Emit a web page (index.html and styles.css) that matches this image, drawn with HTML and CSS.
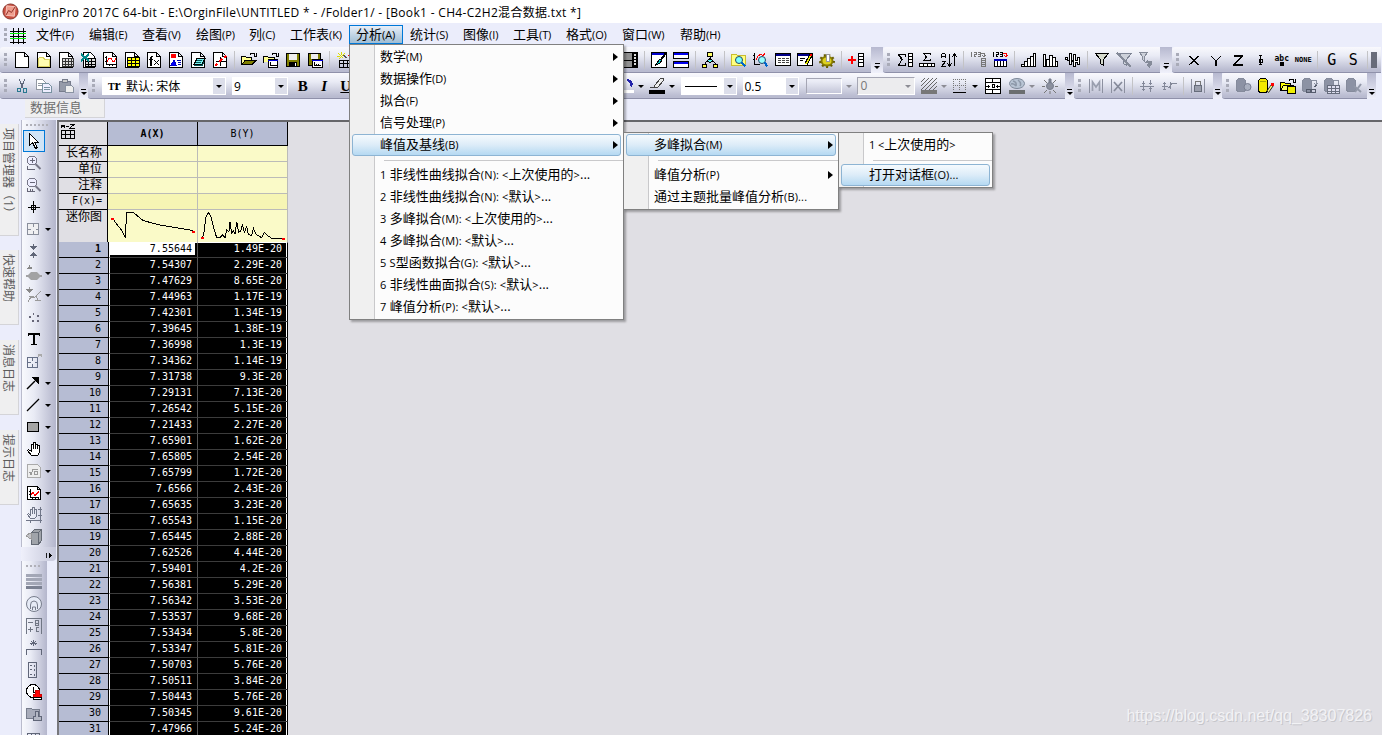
FILE: index.html
```html
<!DOCTYPE html>
<html lang="zh-CN">
<head>
    <meta charset="UTF-8">
    <title>OriginPro 2017C 64-bit</title>
    <link rel="stylesheet" href="styles.css">
</head>
<body>

<svg class="sprite">
    <!-- 新建 -->
    <symbol id="page" viewBox="0 0 16 16"><path class="w" d="M1.5.5h9l4 4v11h-13zM10.500.500v4h4"/></symbol>
    <symbol id="folder-new" viewBox="0 0 16 16"><path class="w" d="M1.5.5h9l4 4v11h-13zM10.500.500v4h4"/><path d="M2.500 14.500v-8l1-1h4l1 2h5v7z" fill="#fffdb0" stroke="#d8d060"/></symbol>
    <symbol id="sheet" viewBox="0 0 16 16"><path class="w" d="M1.5.5h9l4 4v11h-13zM10.500.500v4h4"/><path d="M4.500 6.500h11v8h-11zM4 9.500h12M4 12.500h12M7.500 6v9M10.500 6v9M13.500 6v9" fill="#ddd" stroke="#333"/></symbol>
    <symbol id="excel" viewBox="0 0 16 16"><path class="w" d="M3.500.5h7l4 4v11h-11z"/><path d="M5.500 6.500h10v8h-10zM5 9.500h11M5 12.500h11M8.500 6v9M11.500 6v9" fill="#ddd"/><path d="M1 2l8 7M9 2l-8 7" stroke="#088" stroke-width="2"/></symbol>
    <symbol id="graph" viewBox="0 0 16 16"><path class="w" d="M1.5.5h9l4 4v11h-13zM10.500.500v4h4"/><path d="M4.500 4v8.500h9M3 5.500h2M3 9.500h2M7.500 12v2M10.500 12v2"/><path d="M5 9.500l2-3h2l2 3h1l2-3" stroke="red"/></symbol>
    <symbol id="matrix" viewBox="0 0 16 16"><path class="w" d="M1.5.5h9l4 4v11h-13zM10.500.500v4h4"/><path d="M3.500 5.500h12v9h-12zM3.500 8.500h12M3.500 11.500h12M7.500 5v9M11.500 5v9" fill="#ff0"/></symbol>
    <symbol id="func" viewBox="0 0 16 16"><path class="w" d="M1.5.5h9l4 4v11h-13zM10.500.500v4h4"/><path d="M7 4.500h-1.500v8.500h-2M3 7.500h4"/><path d="M5 5v8" stroke-width="2"/><path d="M8 8l5 5M13 8l-5 5" stroke-width="1.300"/></symbol>
    <symbol id="layout" viewBox="0 0 16 16"><path class="w" d="M1.5.5h9l4 4v11h-13zM10.500.500v4h4"/><path d="M3 2h5v4h-5z" fill="red" stroke="none"/><path d="M3 13l3-5 2 5z" fill="#00f" stroke="#00c"/><path d="M9 8.500h4M10 10.500h3M10 12.500h3" stroke="#00a"/></symbol>
    <symbol id="notes" viewBox="0 0 16 16"><path class="w" d="M1.5.5h9l4 4v11h-13zM10.500.500v4h4"/><path d="M7 6.500h8l-3 6h-8z" fill="#7ee"/><path d="M4 13.500h8l2-3M7 8.500h5M6 10.500h5" stroke="#055"/></symbol>
    <symbol id="axisnew" viewBox="0 0 16 16"><path class="w" d="M1.5.5h9l4 4v11h-13zM10.500.500v4h4"/><path d="M8.500 5v9M4 9.500h10"/><path d="M3 14l2-2M12 6l2-2M7 10l3-3" stroke="red" stroke-width="1.500"/></symbol>
    <!-- 打开与保存 -->
    <symbol id="open" viewBox="0 0 16 16"><path d="M.5 12.500v-8h4l1 1h5v3" fill="#ffff90"/><path d="M1 12.500l3-4h11l-4 4z" fill="#808000"/><path d="M9 2.500l1-1h3l1 2M15.500 1v3.500h-3"/></symbol>
    <symbol id="open2" viewBox="0 0 16 16"><path d="M.5 10.500v-6h4l1 1h6v3" fill="#ffff90"/><path class="w" d="M5.500 7.500h9v8h-9z"/><path d="M5 8.500h10" stroke="#00d"/><path d="M7.500 10v3.500h6M9 2.500l1-1h3l1 2M15.500 1v3.500h-3"/></symbol>
    <symbol id="save" viewBox="0 0 16 16"><path d="M1.500 1.500h13v13h-13z" fill="#808000"/><path d="M4 2h8v6h-8z" fill="#eee" stroke="none"/><path d="M4 10h8v4h-8z" fill="#000" stroke="none"/><path d="M10 11h1v3h-1z" fill="#fff" stroke="none"/></symbol>
    <symbol id="save2" viewBox="0 0 16 16"><path d="M1.500 1.500h12v12h-12z" fill="#808000"/><path d="M4 2h7v5h-7z" fill="#eee" stroke="none"/><path class="w" d="M5.500 7.500h10v8h-10z"/><path d="M5 8.500h11" stroke="#00d"/><path d="M7.500 10v3.500h6M9.500 12v1M11.500 12v1"/></symbol>
    <symbol id="wizard" viewBox="0 0 16 16"><path d="M2 1l5 5M9 1l-6 6M5.500 0v3M1 4.500h3" stroke="#dd0"/><path d="M7 3l4 3" stroke="#555"/><path d="M12 3h4" stroke="red"/><path d="M3.500 8.500h12v7h-12zM3 11.500h12M7.500 8v7M11.500 8v7"/></symbol>
    <!-- 标准工具栏右半部分 -->
    <symbol id="film" viewBox="0 0 16 16"><path d="M.5.5h15v15h-15z" fill="#909090"/><path d="M10 1h5v14h-5z" fill="#000" stroke="none"/><path d="M12 2h2v2h-2zM12 5h2v2h-2zM12 8h2v2h-2zM12 11h2v2h-2z" fill="#ddd" stroke="none"/><path d="M0 8.500h10"/></symbol>
    <symbol id="brush" viewBox="0 0 16 16"><path class="w" d="M.5.5h15v15h-15z"/><path d="M1 2h14" stroke="#00c" stroke-width="2"/><path d="M15 1l-6 8" stroke-width="2"/><path d="M9 7l-5 6.500 5-2.500 2-3z" fill="#0cc"/></symbol>
    <symbol id="split" viewBox="0 0 16 16"><path class="w" d="M.5.5h15v6h-15zM.5 9.500h15v6h-15z"/><path d="M1 2h14M1 11h14" stroke="#00e" stroke-width="2"/></symbol>
    <symbol id="tree" viewBox="0 0 16 16"><path d="M5.500.5h5v4h-5z" fill="#ff6"/><path d="M8 5v3M3 12v-1l5-4 5 4v1"/><path d="M.5 12.500h4v3h-4zM11.500 12.500h4v3h-4z" fill="#ff4"/><path d="M5.500 8.500l2.500-2 2.500 2-2.500 2.500z" fill="#5ee"/></symbol>
    <symbol id="find" viewBox="0 0 16 16"><path d="M.5 2.500h5l1 1h8v10h-14z" fill="#ffff80" stroke="#c8bc30"/><circle class="r" cx="8" cy="8" r="3.500" fill="#7ff" stroke="#246"/><path d="M10.500 10.500l4 4" stroke="#06c" stroke-width="2"/></symbol>
    <symbol id="findg" viewBox="0 0 16 16"><path d="M1.500 1v11.500h5M0 3.500h2M0 7.500h2"/><path d="M3 8l2-4 3-2 2 2 2-3" stroke="red"/><circle class="r" cx="9" cy="8" r="3.500" fill="#9ff" stroke="#246"/><path d="M11.500 10.500l3 4" stroke="#06c" stroke-width="2"/></symbol>
    <symbol id="log" viewBox="0 0 16 16"><path class="w" d="M.5 1.500h15v12h-15z"/><path d="M1 3h14" stroke="#008" stroke-width="2"/><path d="M3 6.500h3M7 6.500h3M11 6.500h3M3 8.500h3M7 8.500h3M11 8.500h3M3 10.500h3M7 10.500h3M11 10.500h3" stroke="#444"/></symbol>
    <symbol id="script" viewBox="0 0 16 16"><path class="w" d="M.5 1.500h15v12h-15z"/><path d="M1 3h11" stroke="#008" stroke-width="2"/><path d="M3 6.500h5M3 8.500h3"/><path d="M14 3l-5 9" stroke="#000" stroke-width="3.500"/><path d="M14 3l-5 9" stroke="#ee0" stroke-width="1.500"/><path d="M13 2h2v2h-2z" fill="red" stroke="none"/></symbol>
    <symbol id="gear" viewBox="0 0 16 16"><g class="r"><ellipse cx="8" cy="9" rx="5.500" ry="4.500" fill="#dcd020" stroke="#887c00" stroke-width="2"/><ellipse cx="8" cy="9" rx="7" ry="6" stroke="#665c00" stroke-width="2" stroke-dasharray="2 2.500"/></g><path d="M7 2h3v7h-3z" fill="#fff" stroke="#999"/></symbol>
    <symbol id="addcol" viewBox="0 0 16 16"><path d="M4 4v8M0 8h8" stroke="red" stroke-width="2"/><path class="w" d="M10.500 1.500h5v13h-5zM10 4.500h6M10 7.500h6M10 10.500h6"/></symbol>
    <!-- 列统计 -->
    <symbol id="sumr" viewBox="0 0 16 16"><path d="M8.500 5v-2.500h-7l3 5.500-3 5.500h7v-2.500M2.500 3l3 5"/><path class="w" d="M11.500 1.500h4v13h-4zM11 4.500h5M11 7.500h5M11 10.500h5"/></symbol>
    <symbol id="sumc" viewBox="0 0 16 16"><path d="M11.500 3v-1.500h-7l3 3.500-3 3.500h7v-2"/><path class="w" d="M.5 11.500h15v3h-15zM4.500 11v4M8.500 11v4M12.500 11v4"/></symbol>
    <symbol id="sort" viewBox="0 0 16 16"><path d="M.5 6v-3l1-2h2l1 2v3M1 4.500h3M.5 9.500h4l-4 5h4M8.500 2v12M6 11l2.500 3 2.500-3M13.500 14v-12M11 5l2.500-3 2.500 3"/></symbol>
    <symbol id="rown" viewBox="0 0 16 16"><path d="M1.500 0v5M4 .5h2v2h-2v2h2M8 .5h2v4h-2M8 2.500h2M11 1.500h3v3M12 3l2 2 2-2" stroke="#777"/><path d="M11.500 6.500h4v8h-4zM11 8.500h4M11 10.500h4M11 12.500h4" stroke="#777"/></symbol>
    <symbol id="coln" viewBox="0 0 16 16"><path d="M1.500 0v5M4 .5h2v2h-2v2h2M8 .5h2v4h-2M8 2.500h2"/><path d="M11 1.500h3v3M12 3l2 2 2-2" stroke="red"/><path class="w" d="M2.500 7.500h12v7h-12zM5.500 8v7M8.500 8v7M11.500 8v7"/><path d="M2 7.500h13" stroke="#00b" stroke-width="2"/></symbol>
    <symbol id="bars1" viewBox="0 0 16 16"><path d="M.5 14.500v-2h3v2M3.500 14v-5h3v5M6.500 14v-8h3v8M9.500 14v-10h3v10M12.500 14v-13h2v13.500h-14" class="w"/></symbol>
    <symbol id="bars2" viewBox="0 0 16 16"><path d="M.5 14.500v-12h2v12M3.500 14v-7h3v7M6.500 14v-11h3v11M9.500 14v-9h3v9M12.500 14v-5h2v5.500h-14" class="w"/></symbol>
    <symbol id="bars3" viewBox="0 0 16 16"><path d="M.5 7.500v-2h2v3h2v-7h2v7h2v-6h2v6h2v-3h2v7h-2v-2h-2v4h-2v-5h-2v3h-2v-4z" class="w"/></symbol>
    <symbol id="funnel" viewBox="0 0 16 16"><path d="M1.500 1.500h13l-5 6v6l-3-2v-4z" fill="#d5dacd"/></symbol>
    <symbol id="funnelx" viewBox="0 0 16 16"><path d="M3.500 1.500h12l-5 6v6l-3-2v-4z" stroke="#7d8494" fill="#cdd1da"/><path d="M1 1l14 14" stroke="#858b99" stroke-width="2"/></symbol>
    <symbol id="funnelr" viewBox="0 0 16 16"><path d="M1.500.5h8l-3 4v5l-2-2v-3z" stroke="#858b99" fill="#cdd1da"/><path d="M7 10l3-3v2h4v3l-2 2v2l-4-3 2-2h-3z" fill="#858b99" stroke="none"/></symbol>
    <!-- 设置列属性 -->
    <symbol id="cx" viewBox="0 0 16 16"><path d="M3 4l10 9M13 4l-10 9" stroke-width="1.300"/></symbol>
    <symbol id="cy" viewBox="0 0 16 16"><path d="M3 4l5 5 5-5M8 9v5" stroke-width="1.300"/></symbol>
    <symbol id="cz" viewBox="0 0 16 16"><path d="M4 4h8v1l-8 7v1h9" stroke-width="1.300"/></symbol>
    <symbol id="ci" viewBox="0 0 16 16"><path d="M7 3.500h3M8.500 3v10M7 12.500h3M7 7h3v3h-3z"/></symbol>
    <!-- 格式 -->
    <symbol id="cut" viewBox="0 0 16 16"><path d="M5 1l4 9M11 1l-4 9" stroke="#60687c"/><path d="M3.500 10.500h3v3h-3zM9.500 10.500h3v4h-3z" stroke="#287890"/></symbol>
    <symbol id="copy" viewBox="0 0 16 16"><path d="M.5 1.500h6l3 3v7h-9zM2 5.500h5M2 7.500h5" fill="#fff" stroke="#9298a2"/><path d="M6.500 5.500h6l3 3v6h-9zM8 9.500h6M8 11.500h6" fill="#eef" stroke="#7892a0"/></symbol>
    <symbol id="paste" viewBox="0 0 16 16"><path d="M1 3.500h11v10h-11z" fill="#969ba9" stroke="#777d8c"/><path d="M4 1.500h5v3h-5z" fill="#ccc" stroke="#777d8c"/><path d="M7.500 7.500h6l2 2v5h-8z" fill="#eee" stroke="#8a93a2"/></symbol>
    <symbol id="fill" viewBox="0 0 16 16"><path d="M9 2q6-1 5 7l-2-3" fill="#22a" stroke="#22a"/><path d="M0 12h16v3h-16z" fill="#fff" stroke="none"/></symbol>
    <symbol id="pen" viewBox="0 0 16 16"><path d="M11.500.5h3v2l-6 7h-3v-2zM5 9l-4 1" fill="#eee" stroke="#444"/><path d="M0 12h16v4h-16z" fill="#000" stroke="none"/></symbol>
    <symbol id="hatch" viewBox="0 0 16 16"><path d="M0 4l4-4M0 8l8-8M0 12l12-12M4 12l12-12M8 12l8-8M12 12l4-4" stroke="#666"/><path d="M0 12h16v4h-16z" fill="#777" stroke="none"/></symbol>
    <symbol id="border" viewBox="0 0 16 16"><path d="M1.500 1v12M7.500 1v12M13.500 1v12M1 1.500h13M1 7.500h13" stroke="#777" stroke-dasharray="1 1"/><path d="M1 14.500h13"/></symbol>
    <symbol id="merge" viewBox="0 0 16 16"><path class="w" d="M.5.5h15v15h-15zM.5 4.500h15M.5 11.500h15M7.500 0v4M7.500 12v4"/><path d="M1 8.500h4M11 8.500h4M3.500 7v3M12.500 7v3M7.500 6.500h2v3h-2z"/></symbol>
    <symbol id="globe" viewBox="0 0 16 16"><g class="r"><ellipse cx="8" cy="5.500" rx="7.500" ry="5" fill="#b8c4d4" stroke="#7d8898"/><path d="M4 3q4 1 3 5M9 2q4 3 2 6M2 6q3-1 5 2" stroke="#8d98a8" stroke-width="1.500"/></g><path d="M0 12h16v4h-16z" fill="#6b6e70" stroke="none"/></symbol>
    <symbol id="bulb" viewBox="0 0 16 16"><g class="r"><path d="M7 1h2v4h-2z" fill="#7b808e" stroke="#777d8c"/><circle cx="8" cy="8" r="3.500" fill="#8b909e" stroke="#777d8c"/><path d="M0 8.500h3M13 8.500h3M2 2l3 3M14 2l-3 3M2 15l3-3M14 15l-3-3M8 13v3" stroke="#777"/></g></symbol>
    <symbol id="mm" viewBox="0 0 16 16"><path d="M1.500 1v14M14.500 1v14" stroke="#8c90a0"/><path class="r" d="M4.500 13v-9l3.500 5 3.500-5v9" stroke="#9a9fae" stroke-width="1.700"/></symbol>
    <symbol id="mx" viewBox="0 0 16 16"><path d="M1.500 1v14M14.500 1v14" stroke="#8c90a0"/><path class="r" d="M4 4l8 9M12 4l-8 9" stroke="#858a9a" stroke-width="1.700"/></symbol>
    <symbol id="ud" viewBox="0 0 16 16"><path d="M4.500 3v10M11.500 2v5M11.500 9v5M1 8.500h14M3 5.500h3M3 11.500h3M10 5.500h3M10 10.500h3" stroke="#838899"/></symbol>
    <symbol id="ud2" viewBox="0 0 16 16"><path d="M3.500 4v8M2 5.500h3M2 11.500h3M1 8.500h5l2 1 3-4h5M9.500 4v7" stroke="#838899"/></symbol>
    <symbol id="lock" viewBox="0 0 16 16"><path d="M1.500 1v14M14.500 1v14" stroke="#8c90a0"/><path d="M5.500 7v-3l1-1h3l1 1v3" stroke="#777"/><path d="M4.500 7.500h7v6h-7z" fill="#9a9eac" stroke="#666c7a"/></symbol>
    <!-- 数据库 -->
    <symbol id="db" viewBox="0 0 16 16"><path d="M.5 2.500l2-2h5l2 2v10l-2 1h-5l-2-1z" fill="#8c92a4" stroke="#858b9c"/></symbol>
    <symbol id="dbs" viewBox="0 0 16 16"><use href="#db"/><circle class="r" cx="11.500" cy="9" r="3.500" fill="#aab0c0" stroke="#777d90"/></symbol>
    <symbol id="dbe" viewBox="0 0 16 16"><path d="M.5 2.500l2-2h5l2 2v11l-2 1h-5l-2-1z" fill="#f4ea00"/><path d="M2 3.500h6" stroke="#aa0"/><path class="r" d="M14.500 7l-5 7" stroke="#000" stroke-width="3"/><path class="r" d="M14 7.500l-4 6" stroke="#ff8" stroke-width="1.500"/><path d="M13 5h3v3h-3z" fill="red" stroke="none"/></symbol>
    <symbol id="dbo" viewBox="0 0 16 16"><path d="M.5 11.500v-7h4l1 1h5v3" fill="#ff0"/><path d="M.5 12.500l3-5h10l-3 5z" fill="#ffff60"/><path d="M7.500 9l2-1h4l2 1v6h-8z" fill="#ee0"/><path d="M9 2.500l1-1h3l1 2M15.500 1v3.500h-3"/></symbol>
    <symbol id="dbv" viewBox="0 0 16 16"><use href="#db"/><path d="M10 2.500h4v4M12 5l2 2 2-2" stroke="#8a90a0"/><path d="M4.500 11.500h4v3h-4zM9.500 11.500h4v3h-4zM12 9l3-2" stroke="#555b6c"/></symbol>
    <symbol id="dbt" viewBox="0 0 16 16"><use href="#db"/><path d="M10 2.500h4v4" stroke="#8a90a0"/><path d="M3.500 7.500h12v8h-12zM3 10.500h12M3 13.500h12M7.500 7v9M11.500 7v9" fill="#dde" stroke="#666c7c"/></symbol>
    <symbol id="dbx" viewBox="0 0 16 16"><use href="#db"/><path class="r" d="M8 8l7 6M15 6l-6 8" stroke="#9298a8" stroke-width="2"/></symbol>
    <!-- 左侧工具 -->
    <symbol id="arrow" viewBox="0 0 16 16"><path class="w" d="M3.500.5v12l3-3 3 6 2-1-3-5h4z"/></symbol>
    <symbol id="zin" viewBox="0 0 16 16"><circle cx="6" cy="5.500" r="4.500" fill="#eef" stroke="#778"/><path d="M4 5.500h5M6.500 3v5M1.500 11v3.500h7" stroke="#667"/><path class="r" d="M9.500 9l5 5" stroke="#778" stroke-width="2"/></symbol>
    <symbol id="zout" viewBox="0 0 16 16"><circle cx="6" cy="5.500" r="4.500" fill="#eef" stroke="#778"/><path d="M4 5.500h5M1.500 11v3.500h7M4.500 12v2M6.500 12v2" stroke="#667"/><path class="r" d="M9.500 9l5 5" stroke="#778" stroke-width="2"/></symbol>
    <symbol id="cross" viewBox="0 0 16 16"><path d="M7.500 2v12M2 8.500h12M5.500 6.500h4v4h-4z"/></symbol>
    <symbol id="box4" viewBox="0 0 16 16"><path d="M1.500 2.500h11v11h-11zM7.500 3v3M7.500 10v3M2 8.500h3M10 8.500h3" stroke="#8a8f9c" fill="#f0f0f2"/></symbol>
    <symbol id="updn" viewBox="0 0 16 16"><path d="M7.500 1v3M7.500 12v3" stroke="#606678"/><path d="M4 3h7l-3.500 4zM4 13h7l-3.500-4z" fill="#606678" stroke="none"/></symbol>
    <symbol id="mask" viewBox="0 0 16 16"><path d="M3.500 0v4M1 3.500h5" stroke="#888"/><path d="M2 2h4l-2 3z" fill="#888" stroke="none"/><path class="r" d="M0 10h2l3-3h6l3 3h2v2h-2l-3 3h-6l-3-3h-2z" fill="#a2a2a4" stroke="none"/></symbol>
    <symbol id="maskr" viewBox="0 0 16 16"><path d="M3.500 0v3M2 15l3-5 3 1 7-7M3 9.500h5M9 13.500h6M10 9l2 4" stroke="#999"/><path d="M0 2h7l-3.500 4z" fill="#888" stroke="none"/></symbol>
    <symbol id="dots4" viewBox="0 0 16 16"><path d="M3 7h2v2h-2zM7 4h1v2h-1zM11 6h2v2h-2zM6 11h2v2h-2zM11 11h2v2h-2z" fill="#667" stroke="none"/></symbol>
    <symbol id="text" viewBox="0 0 16 16"><path d="M2.500 5v-2.500h11v2.500M5 13.500h6"/><path d="M8 2v11" stroke-width="2"/><path d="M2 3.500h12"/></symbol>
    <symbol id="box5" viewBox="0 0 16 16"><path d="M1.500 4.500h10v10h-10zM6.500 5v3M6.500 11v3M2 9.500h3M9 9.500h3" stroke="#667088"/><path d="M12.500 4v-3h3v3M12.500 2.500h3" stroke="#aaa"/></symbol>
    <symbol id="arr" viewBox="0 0 16 16"><path class="r" d="M1 14l8-8" stroke-width="1.500"/><path d="M12.500 2v7l-7-7z" fill="#000" stroke="none"/></symbol>
    <symbol id="line" viewBox="0 0 16 16"><path class="r" d="M1 14l12-12" stroke-width="1.300"/></symbol>
    <symbol id="rect" viewBox="0 0 16 16"><path d="M1.500 3.500h11v9h-11z" fill="#a4a4a4"/></symbol>
    <symbol id="hand" viewBox="0 0 16 16"><path class="w" d="M5.500 14.500l-4-5 1-1 3 2v-7h2v-2h2v2h2v1h2v7l-2 3zM7.500 3v5M9.500 3v5M11.500 4v4"/></symbol>
    <symbol id="eq" viewBox="0 0 16 16"><path d="M1.500 1.500h10l3 3v10h-13z" fill="#eee" stroke="#aaa"/><path d="M3 9.500h1l1 2 2-5h5M8.500 8.500h3v3h-3z" stroke="#999"/></symbol>
    <symbol id="gr2" viewBox="0 0 16 16"><path class="w" d="M1.500 1.500h10l3 3v10h-13zM11.500 1.500v3h3"/><path d="M4 4v8h9M6.500 12v2M9.500 12v2M12.500 12v2M3 6.500h2M3 9.500h2"/><path d="M5 9.500l2-2 2 3 4-4" stroke="red"/></symbol>
    <symbol id="handg" viewBox="0 0 16 16"><path d="M4.500 11.500l-3-4 1-1 2 2v-6h2v-2h2v2h2v7l-2 2zM6.500 3v4M8.500 3v4M14.500 0v16M0 13.500h16M12 2.500h4M12 8.500h4M4.500 13v3" stroke="#707688"/></symbol>
    <symbol id="cube" viewBox="0 0 16 16"><path d="M5.500 3.500l3-3h7v11l-3 4h-7zM5.500 3.500h7v12M12.500 3.500l3-3" fill="#a0a4aa" stroke="#646a74"/><path d="M0 7l4-3h1v6z" fill="#c4c4c8" stroke="#999"/></symbol>
    <symbol id="lines" viewBox="0 0 16 16"><path d="M0 1.500h16M0 5.500h16M0 9.500h16" stroke="#a3a7b6" stroke-width="3"/><path d="M0 13.500h16" stroke="#7b8192" stroke-width="3"/></symbol>
    <symbol id="ring" viewBox="0 0 16 16"><g class="r"><circle cx="8" cy="8" r="7.500" fill="#e6ebf6" stroke="#777d8c"/><path d="M4.500 13v-4q0-4 3.500-4t3.500 4v4M6.500 14v-3h3v3" stroke="#777d8c"/></g></symbol>
    <symbol id="bc" viewBox="0 0 16 16"><path d="M.5 15.500v-15h15v15M2 4.500h5M2 11.500h5M4.500 9v5" stroke="#707684"/><path d="M9.500 2.500h3v5h-3zM9 5.500h4M13 9.500h-3v4h3" stroke="#707684"/></symbol>
    <symbol id="ast" viewBox="0 0 16 16"><path d="M7.500 0v6M4 3.500h7M5 1l5 4M10 1l-5 4M.5 15v-5.500h15v5.500" stroke="#606678"/></symbol>
    <symbol id="scale" viewBox="0 0 16 16"><path d="M2.500.5h8v15h-8zM4 3.500h2M4 7.500h2M4 12.500h2M8.500 3v2M8.500 7v2M8.500 12v2" stroke="#606678"/></symbol>
    <symbol id="stamp" viewBox="0 0 16 16"><circle class="w" cx="7" cy="7" r="6.500"/><path d="M7.500 3v5h3"/><path d="M9 6h4v4h2v3h-8v-3h2z" fill="red" stroke="#c00"/><path class="w" d="M7.500 13.500h8v2h-8z"/></symbol>
    <symbol id="fstamp" viewBox="0 0 16 16"><path d="M.5 2.500h5l1 1h7v9h-13z" fill="#a8acba" stroke="#777d8c"/><path d="M9.500 5.500h3v5h3v4h-8v-4h2z" fill="#b4b8c4" stroke="#606678"/></symbol>
    <symbol id="tbl" viewBox="0 0 16 16"><path d="M1.500 5.500h12v10h-12zM1 8.500h12M5.500 5v10M9.500 5v10" stroke="#606678"/></symbol>
</svg>

<div class="title">
    <svg class="logo" viewBox="0 0 18 18"><circle cx="9" cy="9" r="8" fill="#c94e40" stroke="#86352c"/><path d="M5 3l9 1-1 10-9-1z" fill="#ee9d8d" stroke="#f6c6bb"/><path d="M4 13l3-5 3 2 4-6" stroke="#8a2820" fill="none"/></svg>
    <span>OriginPro 2017C 64-bit - E:\OrginFile\UNTITLED * - /Folder1/ - [Book1 - CH4-C2H2混合数据.txt *]</span>
</div>

<div class="menubar">
    <div class="menu-icon"><i class="grip"></i><svg viewBox="0 0 16 16"><path d="M0 3.500h16M0 8.500h16M0 14.500h16M3.500 0v16M8.500 0v16M13.500 0v16"/><path d="M0 5.500h16M0 10.500h16" stroke="#0e0"/></svg></div>
    <span>文件<small>(F)</small></span>
    <span>编辑<small>(E)</small></span>
    <span>查看<small>(V)</small></span>
    <span>绘图<small>(P)</small></span>
    <span>列<small>(C)</small></span>
    <span>工作表<small>(K)</small></span>
    <span class="open">分析<small>(A)</small></span>
    <span>统计<small>(S)</small></span>
    <span>图像<small>(I)</small></span>
    <span>工具<small>(T)</small></span>
    <span>格式<small>(O)</small></span>
    <span>窗口<small>(W)</small></span>
    <span>帮助<small>(H)</small></span>
</div>

<div class="toolrow">
    <div class="bar bar-std">
        <i class="grip"></i>
        <svg><use href="#page"/></svg><svg><use href="#folder-new"/></svg><svg><use href="#sheet"/></svg><svg><use href="#excel"/></svg><svg><use href="#graph"/></svg><svg><use href="#matrix"/></svg><svg><use href="#func"/></svg><svg><use href="#layout"/></svg><svg><use href="#notes"/></svg><svg><use href="#axisnew"/></svg>
        <i class="sep"></i>
        <svg><use href="#open"/></svg><svg><use href="#open2"/></svg><svg><use href="#save"/></svg><svg><use href="#save2"/></svg>
        <i class="sep"></i>
        <svg><use href="#wizard"/></svg>
        <i class="space"></i>
        <svg><use href="#film"/></svg>
        <i class="sep"></i>
        <svg><use href="#brush"/></svg><svg><use href="#split"/></svg>
        <i class="sep"></i>
        <svg><use href="#tree"/></svg>
        <i class="sep"></i>
        <svg><use href="#find"/></svg><svg><use href="#findg"/></svg><svg><use href="#log"/></svg><svg><use href="#script"/></svg><svg><use href="#gear"/></svg>
        <i class="sep"></i>
        <svg><use href="#addcol"/></svg>
    </div>
    <i class="more"></i>
    <div class="bar bar-col">
        <i class="grip"></i>
        <svg><use href="#sumr"/></svg><svg><use href="#sumc"/></svg><svg><use href="#sort"/></svg>
        <i class="sep"></i>
        <svg><use href="#rown"/></svg><svg><use href="#coln"/></svg>
        <i class="sep"></i>
        <svg><use href="#bars1"/></svg><svg><use href="#bars2"/></svg><svg><use href="#bars3"/></svg>
        <i class="sep"></i>
        <svg><use href="#funnel"/></svg><svg><use href="#funnelx"/></svg><svg><use href="#funnelr"/></svg>
    </div>
    <i class="more"></i>
    <div class="bar bar-set">
        <i class="grip"></i>
        <svg><use href="#cx"/></svg><svg><use href="#cy"/></svg><svg><use href="#cz"/></svg><svg><use href="#ci"/></svg>
        <b class="tiny abc">abc</b><b class="tiny">NONE</b>
        <i class="sep"></i>
        <b class="letter">G</b><b class="letter">S</b>
        <i class="sep"></i>
        <i class="edge"></i>
    </div>
</div>

<div class="toolrow">
    <div class="bar bar-edit">
        <i class="grip"></i>
        <svg><use href="#cut"/></svg><svg><use href="#copy"/></svg><svg><use href="#paste"/></svg>
    </div>
    <i class="more small"></i>
    <div class="bar bar-fmt">
        <i class="grip"></i>
        <div class="combo font"><b class="tt"><small>T</small>r</b><span>默认: 宋体</span><i class="btn"></i></div>
        <div class="combo size"><span>9</span><i class="btn"></i></div>
        <b class="biu">B</b><b class="biu it">I</b><b class="biu un">U</b>
        <i class="space"></i>
        <svg><use href="#fill"/></svg><i class="dd"></i>
        <svg><use href="#pen"/></svg><i class="dd"></i>
        <div class="combo style"><i class="stroke"></i><i class="btn"></i></div>
        <div class="combo width"><span>0.5</span><i class="btn"></i></div>
        <div class="flat"></div><i class="dd off"></i>
        <div class="flat num"><span>0</span><i class="dd off"></i></div>
        <svg class="gap"><use href="#hatch"/></svg><i class="dd off"></i>
        <svg><use href="#border"/></svg><i class="dd"></i>
        <svg class="gap"><use href="#merge"/></svg>
        <svg class="gap"><use href="#globe"/></svg><i class="dd off"></i>
        <svg class="gap"><use href="#bulb"/></svg>
    </div>
    <i class="more small"></i>
    <div class="bar bar-mask">
        <i class="grip"></i>
        <svg><use href="#mm"/></svg><svg><use href="#mx"/></svg>
        <i class="sep"></i>
        <svg><use href="#ud"/></svg><svg><use href="#ud2"/></svg>
        <i class="sep"></i>
        <svg><use href="#lock"/></svg>
    </div>
    <i class="more small"></i>
    <div class="bar bar-db">
        <i class="grip"></i>
        <svg><use href="#dbs"/></svg><svg><use href="#dbe"/></svg><svg><use href="#dbo"/></svg><svg><use href="#dbv"/></svg><svg><use href="#dbt"/></svg><svg><use href="#dbx"/></svg>
    </div>
    <i class="more small"></i>
</div>

<div class="info"><span>数据信息</span></div>

<div class="main">
    <div class="docks">
        <div class="dock first">项目管理器（1）</div>
        <div class="dock">快速帮助</div>
        <div class="dock">消息日志</div>
        <div class="dock">提示日志</div>
    </div>

    <div class="side">
        <div class="palette tools">
            <i class="grip-h"></i>
            <div class="tool on"><svg><use href="#arrow"/></svg></div>
            <div class="tool"><svg><use href="#zin"/></svg></div>
            <div class="tool"><svg><use href="#zout"/></svg></div>
            <div class="tool"><svg><use href="#cross"/></svg></div>
            <div class="tool"><svg><use href="#box4"/></svg><i class="dd"></i></div>
            <div class="tool"><svg><use href="#updn"/></svg></div>
            <div class="tool"><svg><use href="#mask"/></svg><i class="dd"></i></div>
            <div class="tool"><svg><use href="#maskr"/></svg><i class="dd"></i></div>
            <div class="tool"><svg><use href="#dots4"/></svg></div>
            <div class="tool"><svg><use href="#text"/></svg></div>
            <div class="tool"><svg><use href="#box5"/></svg></div>
            <div class="tool"><svg><use href="#arr"/></svg><i class="dd"></i></div>
            <div class="tool"><svg><use href="#line"/></svg><i class="dd"></i></div>
            <div class="tool"><svg><use href="#rect"/></svg><i class="dd"></i></div>
            <div class="tool"><svg><use href="#hand"/></svg></div>
            <div class="tool"><svg><use href="#eq"/></svg><i class="dd"></i></div>
            <div class="tool"><svg><use href="#gr2"/></svg><i class="dd"></i></div>
            <div class="tool"><svg><use href="#handg"/></svg></div>
            <div class="tool"><svg><use href="#cube"/></svg></div>
        </div>
        <div class="more-h"><svg viewBox="0 0 8 8"><path d="M.5 1v6"/><path d="M3 0l4 4-4 4z" fill="#000" stroke="none"/></svg></div>
        <div class="palette extra">
            <i class="grip-h"></i>
            <div class="tool"><svg><use href="#lines"/></svg></div>
            <div class="tool"><svg><use href="#ring"/></svg></div>
            <div class="tool"><svg><use href="#bc"/></svg></div>
            <div class="tool"><svg><use href="#ast"/></svg></div>
            <div class="tool"><svg><use href="#scale"/></svg></div>
            <div class="tool"><svg><use href="#stamp"/></svg></div>
            <div class="tool"><svg><use href="#fstamp"/></svg></div>
            <div class="tool"><svg><use href="#tbl"/></svg></div>
        </div>
    </div>

    <div class="work">
        <div class="sheet">
            <div class="row head">
                <div class="corner"><svg viewBox="0 0 16 16"><path d="M1.500 4v-3h3v3M1 2.500h3M6 2.500h3M10 .5h4l-4 3.500h4.500M1.500 6.500h13v8h-13zM1 10.500h13M5.500 6v8M10.500 6v8"/></svg></div>
                <div class="col"><b>A(X)</b></div>
                <div class="col">B(Y)</div>
            </div>
            <div class="row label"><div>长名称</div><div></div><div></div></div>
            <div class="row label"><div>单位</div><div></div><div></div></div>
            <div class="row label"><div>注释</div><div></div><div></div></div>
            <div class="row label fx"><div>F(x)=</div><div></div><div></div></div>
            <div class="row label spark">
                <div>迷你图</div>
                <div><svg viewBox="324 345 270 96"><path d="M338 370l14 20 10 12 14 24 4-74h20l14 12 16 13 50 13 55 9 45 8"/><path class="end" d="M333 371h10M575 410h10"/></svg></div>
                <div><svg viewBox="594 345 270 96"><path d="M607 430l5-20 6-45 7-12 7 9 8 33 10 33h10l8-8 7 8 5-23 7 5 3-30 5 35 5-7 5 10 5-38 6 32 6-4 5-20 6 24 7-17 5 23 10 4 5-22 8 18 17 10 8-16 7 8 15 10 35 2"/><path class="end" d="M602 430h10M845 432h10"/></svg></div>
            </div>
            <div class="cells" id="cells"></div>
        </div>
        <div class="watermark">https://blog.csdn.net/qq_38307826</div>
    </div>
</div>

<!-- 分析菜单 -->
<div class="menu menu-analysis">
    <div class="item sub">数学<small>(M)</small></div>
    <div class="item sub">数据操作<small>(D)</small></div>
    <div class="item sub">拟合<small>(F)</small></div>
    <div class="item sub">信号处理<small>(P)</small></div>
    <div class="item sub active">峰值及基线<small>(B)</small></div>
    <hr>
    <div class="item"><small>1</small> 非线性曲线拟合<small>(N): &lt;</small>上次使用的<small>&gt;</small>...</div>
    <div class="item"><small>2</small> 非线性曲线拟合<small>(N): &lt;</small>默认<small>&gt;</small>...</div>
    <div class="item"><small>3</small> 多峰拟合<small>(M): &lt;</small>上次使用的<small>&gt;</small>...</div>
    <div class="item"><small>4</small> 多峰拟合<small>(M): &lt;</small>默认<small>&gt;</small>...</div>
    <div class="item"><small>5 S</small>型函数拟合<small>(G): &lt;</small>默认<small>&gt;</small>...</div>
    <div class="item"><small>6</small> 非线性曲面拟合<small>(S): &lt;</small>默认<small>&gt;</small>...</div>
    <div class="item"><small>7</small> 峰值分析<small>(P): &lt;</small>默认<small>&gt;</small>...</div>
</div>

<div class="menu menu-peak">
    <div class="item sub active">多峰拟合<small>(M)</small></div>
    <hr>
    <div class="item sub">峰值分析<small>(P)</small></div>
    <div class="item">通过主题批量峰值分析<small>(B)...</small></div>
</div>

<div class="menu menu-multi">
    <div class="item"><small>1 &lt;</small>上次使用的<small>&gt;</small></div>
    <hr>
    <div class="item active">打开对话框<small>(O)...</small></div>
</div>

<script>
    const data = [
        ['7.55644', '1.49E-20'], ['7.54307', '2.29E-20'], ['7.47629', '8.65E-20'],
        ['7.44963', '1.17E-19'], ['7.42301', '1.34E-19'], ['7.39645', '1.38E-19'],
        ['7.36998', '1.3E-19'], ['7.34362', '1.14E-19'], ['7.31738', '9.3E-20'],
        ['7.29131', '7.13E-20'], ['7.26542', '5.15E-20'], ['7.21433', '2.27E-20'],
        ['7.65901', '1.62E-20'], ['7.65805', '2.54E-20'], ['7.65799', '1.72E-20'],
        ['7.6566', '2.43E-20'], ['7.65635', '3.23E-20'], ['7.65543', '1.15E-20'],
        ['7.65445', '2.88E-20'], ['7.62526', '4.44E-20'], ['7.59401', '4.2E-20'],
        ['7.56381', '5.29E-20'], ['7.56342', '3.53E-20'], ['7.53537', '9.68E-20'],
        ['7.53434', '5.8E-20'], ['7.53347', '5.81E-20'], ['7.50703', '5.76E-20'],
        ['7.50511', '3.84E-20'], ['7.50443', '5.76E-20'], ['7.50345', '9.61E-20'],
        ['7.47966', '5.24E-20']
    ];

    // 填充数据行
    document.getElementById('cells').innerHTML = data.map((r, i) => `
        <div class="row data">
            <div class="num">${i + 1}</div>
            <div class="cell">${r[0]}</div>
            <div class="cell">${r[1]}</div>
        </div>`).join('');
</script>

</body>
</html>
```

FILE: styles.css
```css
* {
    box-sizing: border-box;
}
body {
    margin: 0;
    width: 1382px;
    height: 735px;
    overflow: hidden;
    position: relative;
    display: flex;
    flex-direction: column;
    background: #ebedfb;
    color: #000;
    font-family: "Open Sans", "Noto Sans CJK SC", sans-serif;
    font-size: 13px;
}
i {
    font-style: normal;
    flex: none;
}
small {
    font-size: 11px;
    letter-spacing: -0.1px;
}
svg {
    fill: none;
    stroke: #000;
    shape-rendering: crispEdges;
    flex: none;
    display: block;
}
.w {
    fill: #fff;
}
.r {
    shape-rendering: auto;
}
.sprite {
    display: none;
}

/* 标题栏 */
.title {
    height: 23px;
    background: #fff;
    display: flex;
    align-items: center;
    padding-left: 2px;
    font-size: 12px;
    letter-spacing: 0.32px;
    white-space: nowrap;
    flex: none;
}
.logo {
    width: 17px;
    height: 17px;
    margin-right: 4px;
    shape-rendering: auto;
}

/* 菜单栏 */
.menubar {
    height: 24px;
    flex: none;
    display: grid;
    grid-template-columns: 29px 53px 53px 54px 53px 41px 66px 54px 53px 50px 53px 56px 58px 60px;
    white-space: nowrap;
    line-height: 22px;
}
.menubar span {
    padding-left: 7px;
}
.menubar .open {
    margin: 2px 0 4px;
    padding-left: 6px;
    line-height: 16px;
    border: 1px solid #0078d7;
    background: linear-gradient(#e8eef8, #9fbdd4);
}
.menu-icon {
    display: flex;
    align-items: center;
    padding: 0 0 0 4px;
}
.menu-icon svg {
    width: 16px;
    height: 16px;
    margin-left: 3px;
}
.grip {
    width: 3px;
    height: 15px;
    background: repeating-linear-gradient(#a9abb8 0 3px, transparent 3px 5px);
}

/* 工具栏 */
.toolrow {
    display: flex;
    height: 26px;
    flex: none;
}
.bar {
    display: flex;
    align-items: center;
    height: 26px;
    padding: 1px 0 0 4px;
    flex: none;
    background: linear-gradient(#f9f9fd, #e9ebf5 35%, #b9bbd0 93%);
    border-bottom: 1px solid #8f91aa;
    border-radius: 3px 0 0 3px;
}
.bar .grip {
    margin-right: 4px;
}
.bar svg {
    width: 16px;
    height: 16px;
    margin: 0 3px;
}
.bar-std { width: 871px; }
.bar-col { width: 277px; }
.bar-set { width: 209px; overflow: hidden; }
.bar-edit { width: 79px; }
.bar-fmt { width: 977px; }
.bar-mask { width: 139px; }
.bar-db { width: 145px; }
.sep {
    width: 1px;
    height: 18px;
    margin: 0 3px;
    background: #c3c3c6;
}
.bar-std .space {
    width: 264px;
}
.more {
    width: 12px;
    height: 26px;
    background: linear-gradient(#b7b9d0, #f0f1fb);
    display: flex;
    flex-direction: column;
    align-items: center;
    justify-content: flex-end;
    padding-bottom: 4px;
}
.more.small {
    width: 9px;
}
.more::before {
    content: "";
    width: 5px;
    height: 1px;
    background: #000;
    margin-bottom: 2px;
}
.more::after, .dd::before, .btn::before {
    content: "";
    width: 0;
    border: 3px solid transparent;
    border-top-color: #000;
    border-bottom: 0;
}
.tiny {
    width: 21.500px;
    text-align: center;
    font: bold 7px "DejaVu Sans Mono", monospace;
}
.abc {
    font-size: 8px;
    height: 12px;
}
.abc::after {
    content: "";
    display: block;
    width: 4px;
    height: 4px;
    margin: -1px auto 0;
    background: #000;
}
.letter {
    width: 21.500px;
    text-align: center;
    font: 15px "DejaVu Sans Mono", monospace;
}
.edge {
    width: 6px;
    height: 16px;
    background: #686c7a;
}
.dd {
    width: 8px;
    display: flex;
    justify-content: center;
    margin: 0 1px 0 0;
}
.dd.off::before {
    border-top-color: #8c8c94;
}
.combo {
    height: 18px;
    background: #fff;
    display: flex;
    align-items: center;
    font-size: 12px;
    padding-left: 2px;
    flex: none;
    white-space: nowrap;
}
.combo .btn {
    width: 12px;
    height: 16px;
    margin: 0 1px 0 auto;
    background: #dcdeea;
    display: flex;
    align-items: center;
    justify-content: center;
}
.combo.font { width: 124px; margin: 0 6px 0 3px; padding-left: 6px; }
.combo.size { width: 56px; margin-right: 4px; }
.combo.style { width: 56px; margin: 0 6px 0 4px; padding-left: 4px; }
.combo.width { width: 56px; margin-right: 7px; }
.tt {
    font: bold 14px "Liberation Serif", serif;
    width: 18px;
}
.tt small {
    font-size: 10px;
}
.stroke {
    width: 32px;
    height: 1px;
    background: #000;
}
.biu {
    width: 21.500px;
    text-align: center;
    font: bold 15px "Liberation Serif", serif;
}
.it {
    font-style: italic;
}
.un {
    text-decoration: underline;
}
.bar-fmt .space {
    width: 258px;
}
.flat {
    width: 36px;
    height: 16px;
    border: 1px solid #a5a6b4;
    border-right-color: #fff;
    border-bottom-color: #fff;
    margin-right: 3px;
    flex: none;
}
.flat.num {
    width: 58px;
    height: 18px;
    margin: 0 1px 0 3px;
    padding: 0 1px 0 3px;
    background: #ececee;
    color: #777;
    font-size: 12px;
    display: flex;
    align-items: center;
    justify-content: space-between;
}
.bar .gap {
    margin-left: 5px;
}

.info {
    height: 21px;
    padding-left: 25px;
    flex: none;
}
.info span {
    display: block;
    width: 80px;
    height: 19px;
    line-height: 16px;
    padding-left: 5px;
    color: #6d6d6d;
    background: #efeff0;
    border-right: 1px solid #d4d4d8;
    border-bottom: 1px solid #d4d4d8;
}

.main {
    flex: 1;
    display: flex;
    min-height: 0;
}

/* 左侧停靠标签 */
.docks {
    width: 21px;
    padding-top: 4px;
}
.dock {
    width: 19px;
    height: 75px;
    margin-bottom: 15px;
    padding-top: 4px;
    writing-mode: vertical-rl;
    text-orientation: sideways;
    line-height: 20px;
    font-size: 12px;
    color: #5c5c5c;
    background: #efeff0;
    border-right: 1px solid #d4d4d8;
    border-bottom: 1px solid #d4d4d8;
    white-space: nowrap;
}
.dock.first {
    height: 112px;
    margin-bottom: 14px;
}

/* 左侧工具条 */
.side {
    width: 36px;
}
.palette {
    background: linear-gradient(90deg, #f8f9fd, #e9ebf5 35%, #b4b6cc);
    border-left: 1px solid #b9bbcc;
    padding: 4px 0 0 1px;
}
.tools {
    width: 35px;
    height: 427px;
}
.extra {
    width: 26px;
    height: 190px;
}
.grip-h {
    display: block;
    width: 23px;
    height: 2px;
    margin: 0 0 4px 3px;
    background: repeating-linear-gradient(90deg, #b0b0b8 0 2px, transparent 2px 4px);
}
.extra .grip-h {
    width: 15px;
}
.tool {
    height: 22px;
    display: flex;
    align-items: center;
    padding-left: 3px;
}
.tool svg {
    width: 16px;
    height: 16px;
}
.tool .dd {
    margin-left: 2px;
}
.tool.on {
    width: 22px;
    background: #d0e4f6;
    border: 1px solid #0078d7;
    padding-left: 2px;
}
.more-h {
    width: 35px;
    height: 14px;
    background: linear-gradient(90deg, #eff0fb, #c6c8da);
    padding: 5px 0 0 25px;
    border-radius: 0 0 4px 0;
}
.more-h svg {
    width: 7px;
    height: 7px;
}

/* 工作表 */
.work {
    flex: 1;
    background: #e0dfe4;
    border-top: 2px solid #66666a;
    border-left: 2px solid #77777b;
    display: flex;
    align-items: flex-start;
    justify-content: space-between;
    overflow: hidden;
}
.sheet {
    width: 230px;
    font-family: "DejaVu Sans Mono", "Noto Sans CJK SC", monospace;
    font-size: 10px;
}
.row {
    display: grid;
    grid-template-columns: 49px 90px 90px;
}
.row > div {
    border-right: 1px solid #000;
    border-bottom: 1px solid #000;
}
.head {
    height: 24px;
}
.corner {
    padding: 2px 1px;
}
.corner svg {
    width: 16px;
    height: 16px;
}
.col {
    background: #b6bcd3;
    text-align: center;
    line-height: 23px;
}
.label {
    height: 16px;
}
.label > div {
    background: #fafac8;
    border-color: #bbbbb8;
}
.label > div:first-child {
    background: #e0dfe4;
    border-color: #000;
    font-size: 12px;
    line-height: 14px;
    text-align: right;
    padding-right: 5px;
}
.label.fx > div {
    background: #f6f5b4;
}
.label.fx > div:first-child {
    background: #e0dfe4;
    font-size: 10px;
}
.spark {
    height: 32px;
}
.spark > div {
    border-bottom-color: #000;
}
.spark svg {
    width: 90px;
    height: 32px;
    stroke-width: 3;
}
.spark .end {
    stroke: red;
    stroke-width: 6;
}
.data {
    height: 16px;
    grid-template-columns: 50px 89px 90px;
}
.num, .cell {
    text-align: right;
    line-height: 14px;
}
.num {
    background: #b6bcd3;
    padding-right: 7px;
}
.data .cell {
    background: #000;
    color: #fff;
    padding-right: 5px;
    border-right-color: #555;
    border-bottom-color: #3c3c3c;
}
.data .cell:nth-child(2) {
    border-left: 1px solid #fff;
}
.data .cell:last-child {
    border-right: 1px solid #000;
    box-shadow: inset -1px 0 #fff;
}
.data:first-child .num {
    font-weight: bold;
}
.data:first-child .cell {
    border-top: 1px solid #fff;
    line-height: 12px;
}
.data:first-child .cell:nth-child(2) {
    background: linear-gradient(#fff, #fff) 0 0 / 85px 12px no-repeat #000;
    color: #000;
}
.watermark {
    align-self: flex-end;
    margin: 0 10px 10px 0;
    font: 16px "Liberation Sans", sans-serif;
    color: #f2f2f5;
    text-shadow: 1px 1px #c6c6cb;
}

/* 弹出菜单 */
.menu {
    position: absolute;
    padding: 1px 2px 2px;
    border: 1px solid #808080;
    background: linear-gradient(90deg, #f0f0f0 24px, #c9c9cb 24px 25px, #fcfcfc 25px);
    box-shadow: 2px 2px 2px rgba(0, 0, 0, 0.3);
}
.menu-analysis {
    left: 349px;
    top: 44px;
    width: 275px;
    height: 276px;
}
.menu-peak {
    left: 623px;
    top: 132px;
    width: 216px;
    height: 78px;
}
.menu-multi {
    left: 838px;
    top: 132px;
    width: 155px;
    height: 56px;
}
.item {
    height: 22px;
    line-height: 19px;
    padding-left: 27px;
    border: 1px solid transparent;
    white-space: nowrap;
    position: relative;
}
.item.active {
    background: linear-gradient(#f5fafd, #dcecf8 50%, #b5d9f2);
    border-color: #8db4d3;
    border-radius: 3px;
}
.sub::after {
    content: "";
    position: absolute;
    right: 2px;
    top: 6px;
    border: 4px solid transparent;
    border-left: 5px solid #000;
    border-right: 0;
}
.menu hr {
    margin: 4px -2px 3px 32px;
    border: 0;
    height: 1px;
    background: #c9c9cb;
}
.menu hr ~ .item small {
    letter-spacing: 0.15px;
}
```
